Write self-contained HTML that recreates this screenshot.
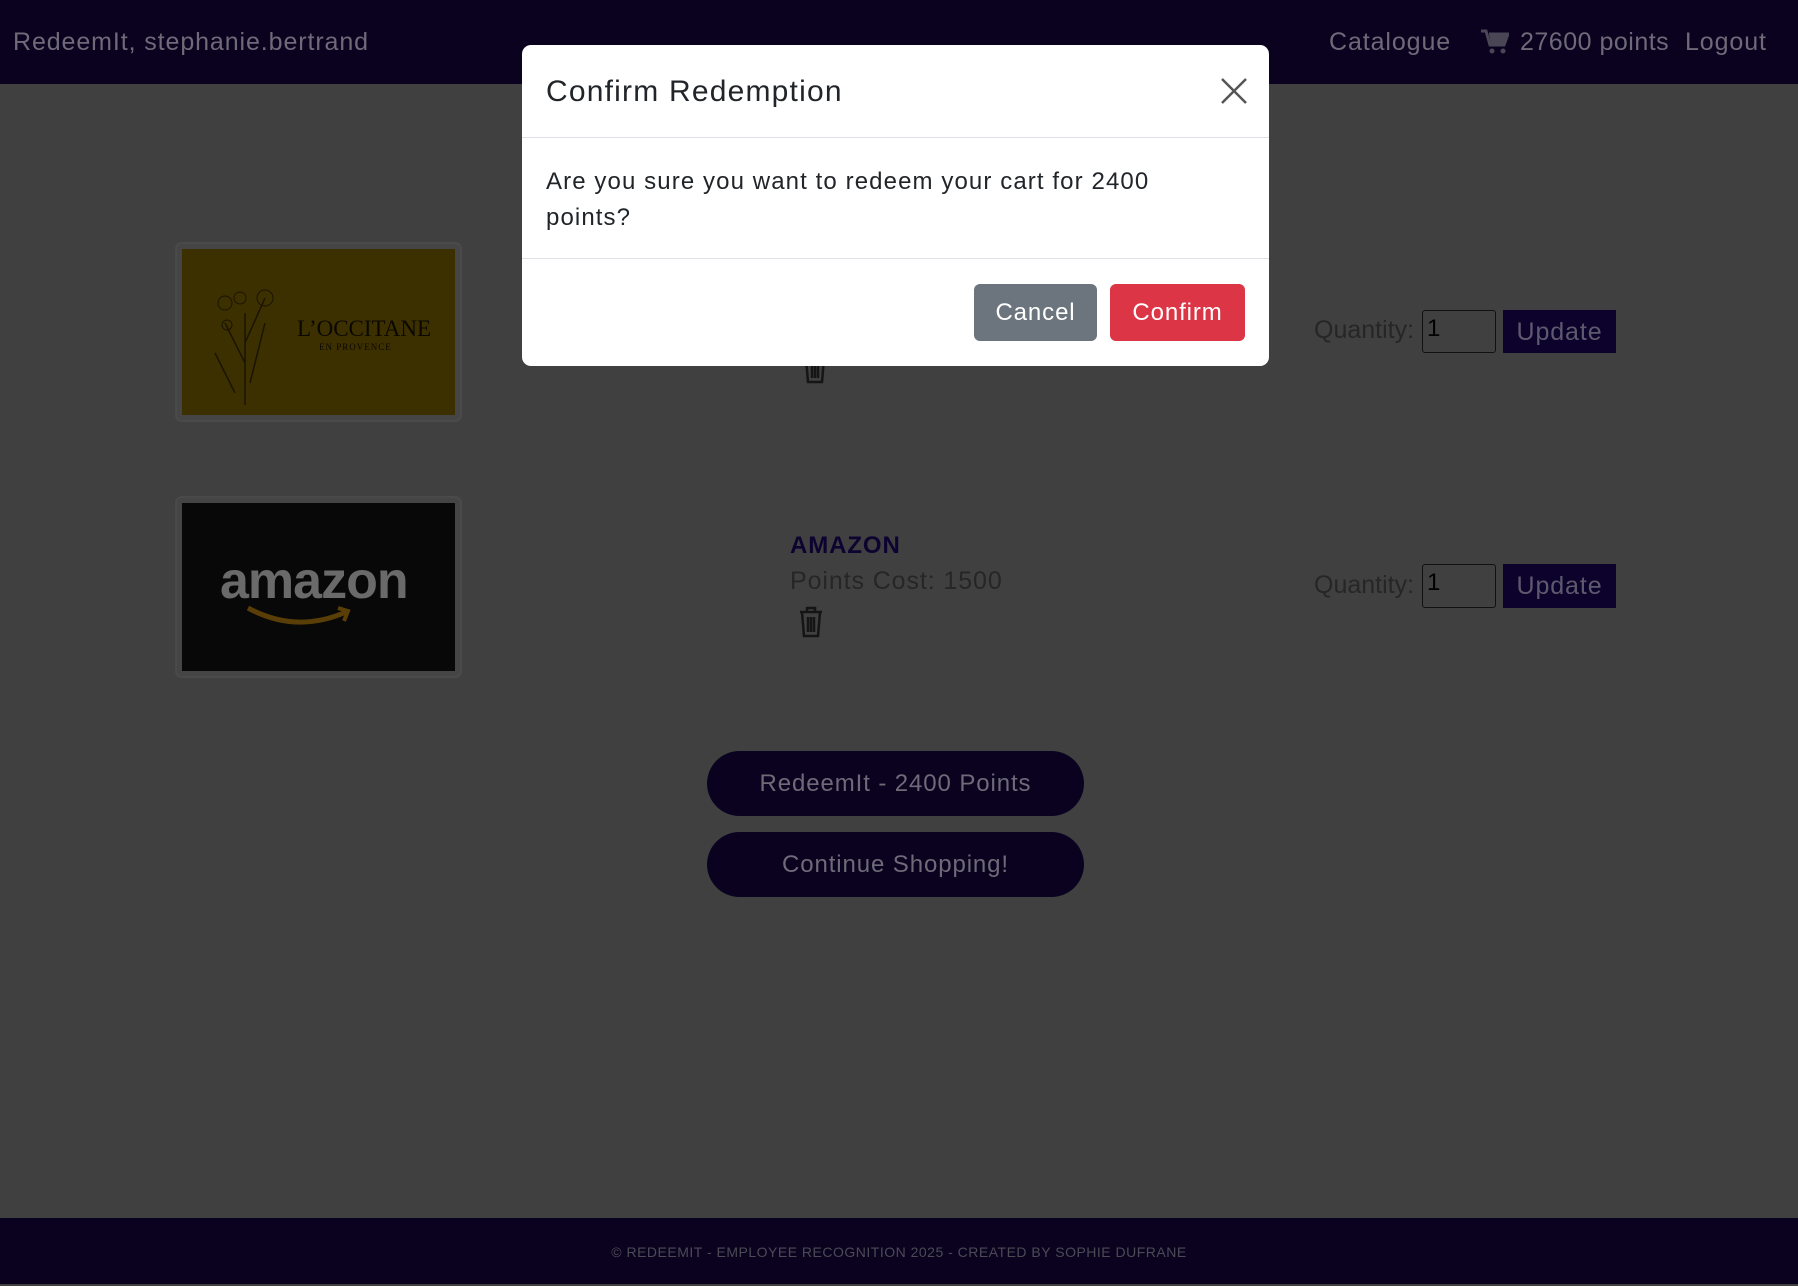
<!DOCTYPE html>
<html><head><meta charset="utf-8"><style>
*{box-sizing:border-box;margin:0;padding:0}
body{width:1798px;height:1284px;background:#404040;font-family:"Liberation Sans",sans-serif;position:relative;overflow:hidden;letter-spacing:0.9px}
.a{position:absolute}
.nav{left:0;top:0;width:1798px;height:84px;background:#0b0220}
.navt{color:#6e6a78;font-size:25px;top:28px}
.frame{border:2px solid #4a4a4a;border-radius:7px;background:#454545}
.qty{color:#262626;font-size:25px}
.inp{border:1px solid #111;border-radius:3px;background:#404040;color:#000;font-size:24px;padding:4px 4px}
.upd{background:#0d022b;color:#5e5a6e;font-size:25px;text-align:center;line-height:44px}
.pill{background:#0b0220;border-radius:33px;color:#6e6a78;font-size:24px;text-align:center}
.footer{left:0;top:1218px;width:1798px;height:66px;background:#0b0220;color:#4c4a55;font-size:14px;text-align:center;line-height:68px}
.modal{left:522px;top:45px;width:747px;height:321px;background:#fff;border-radius:9px}
</style></head><body>
<div class="a nav"></div>
<div class="a navt" style="left:13px">RedeemIt, stephanie.bertrand</div>
<div class="a navt" style="left:1329px">Catalogue</div>
<svg class="a" style="left:1481px;top:29px" width="28" height="26" viewBox="0 0 28 26"><path d="M0 2h5l4 14h14l4-11H8" fill="none" stroke="#4a4656" stroke-width="3"/><path d="M8 5h19l-4 11H10z" fill="#4a4656"/><circle cx="11" cy="22" r="2.5" fill="#4a4656"/><circle cx="22" cy="22" r="2.5" fill="#4a4656"/></svg>
<div class="a navt" style="left:1520px;letter-spacing:0.5px">27600 points</div>
<div class="a navt" style="left:1685px">Logout</div>

<div class="a frame" style="left:175px;top:242px;width:287px;height:180px"></div>
<div class="a" style="left:182px;top:249px;width:273px;height:166px;background:#3d3000"></div>
<div class="a" style="left:297px;top:316px;font-family:'Liberation Serif',serif;font-size:23px;color:#0a0800;letter-spacing:0">L’OCCITANE</div>
<div class="a" style="left:319px;top:342px;font-family:'Liberation Serif',serif;font-size:9px;color:#0a0800;letter-spacing:1px">EN PROVENCE</div>
<svg class="a" style="left:205px;top:283px" width="80" height="125"><path d="M40 122V30M40 60L60 15M40 80L20 40M30 110L10 70M45 100L60 40" stroke="#1a1400" stroke-width="1.5" fill="none"/><circle cx="60" cy="15" r="8" fill="none" stroke="#1a1400"/><circle cx="20" cy="20" r="7" fill="none" stroke="#1a1400"/><circle cx="35" cy="15" r="6" fill="none" stroke="#1a1400"/><circle cx="22" cy="42" r="5" fill="none" stroke="#1a1400"/></svg>

<div class="a frame" style="left:175px;top:496px;width:287px;height:182px"></div>
<div class="a" style="left:182px;top:503px;width:273px;height:168px;background:#080808"></div>
<div class="a" style="left:220px;top:551px;font-size:52px;font-weight:bold;color:#6a6a6a;letter-spacing:-1px">amazon</div>
<svg class="a" style="left:246px;top:604px" width="110" height="26"><path d="M2 4Q50 30 100 8" stroke="#5a3e08" stroke-width="5" fill="none"/><path d="M92 4l10 3-4 10" stroke="#5a3e08" stroke-width="4" fill="none"/></svg>

<div class="a" style="left:790px;top:532px;font-size:24px;font-weight:bold;color:#0d0330">AMAZON</div>
<div class="a" style="left:790px;top:567px;font-size:25px;color:#262626">Points Cost: 1500</div>
<svg class="a" style="left:798px;top:606px" width="26" height="32" viewBox="0 0 26 32"><path d="M2 6h22M9 6V2h8v4M4 6l2 24h14l2-24M10 11v15M13 11v15M16 11v15" stroke="#151515" stroke-width="2.5" fill="none"/></svg>
<svg class="a" style="left:802px;top:352px" width="26" height="32" viewBox="0 0 26 32"><path d="M4 6l2 24h14l2-24M10 11v15M13 11v15M16 11v15" stroke="#151515" stroke-width="2.5" fill="none"/></svg>

<div class="a qty" style="left:1314px;top:316px;letter-spacing:0">Quantity:</div>
<div class="a inp" style="left:1422px;top:310px;width:74px;height:43px">1</div>
<div class="a upd" style="left:1503px;top:310px;width:113px;height:43px">Update</div>
<div class="a qty" style="left:1314px;top:571px;letter-spacing:0">Quantity:</div>
<div class="a inp" style="left:1422px;top:564px;width:74px;height:44px">1</div>
<div class="a upd" style="left:1503px;top:564px;width:113px;height:44px">Update</div>

<div class="a pill" style="left:707px;top:751px;width:377px;height:65px;line-height:65px">RedeemIt - 2400 Points</div>
<div class="a pill" style="left:707px;top:832px;width:377px;height:65px;line-height:65px">Continue Shopping!</div>

<div class="a footer" style="letter-spacing:0.5px">© REDEEMIT - EMPLOYEE RECOGNITION 2025 - CREATED BY SOPHIE DUFRANE</div>

<div class="a modal">
 <div class="a" style="left:24px;top:30px;font-size:30px;color:#212529;letter-spacing:1.2px">Confirm Redemption</div>
 <svg class="a" style="left:699px;top:33px" width="26" height="26"><path d="M1 1L25 25M25 1L1 25" stroke="#555" stroke-width="2.5"/></svg>
 <div class="a" style="left:0;top:92px;width:747px;height:1px;background:#dee2e6"></div>
 <div class="a" style="left:24px;top:119px;font-size:24px;line-height:36px;color:#212529;width:640px;letter-spacing:1.1px">Are you sure you want to redeem your cart for 2400 points?</div>
 <div class="a" style="left:0;top:213px;width:747px;height:1px;background:#dee2e6"></div>
 <div class="a" style="left:452px;top:239px;width:123px;height:57px;background:#6c757d;border-radius:6px;color:#fff;font-size:24px;text-align:center;line-height:57px">Cancel</div>
 <div class="a" style="left:588px;top:239px;width:135px;height:57px;background:#dc3545;border-radius:6px;color:#fff;font-size:24px;text-align:center;line-height:57px">Confirm</div>
</div>
</body></html>
